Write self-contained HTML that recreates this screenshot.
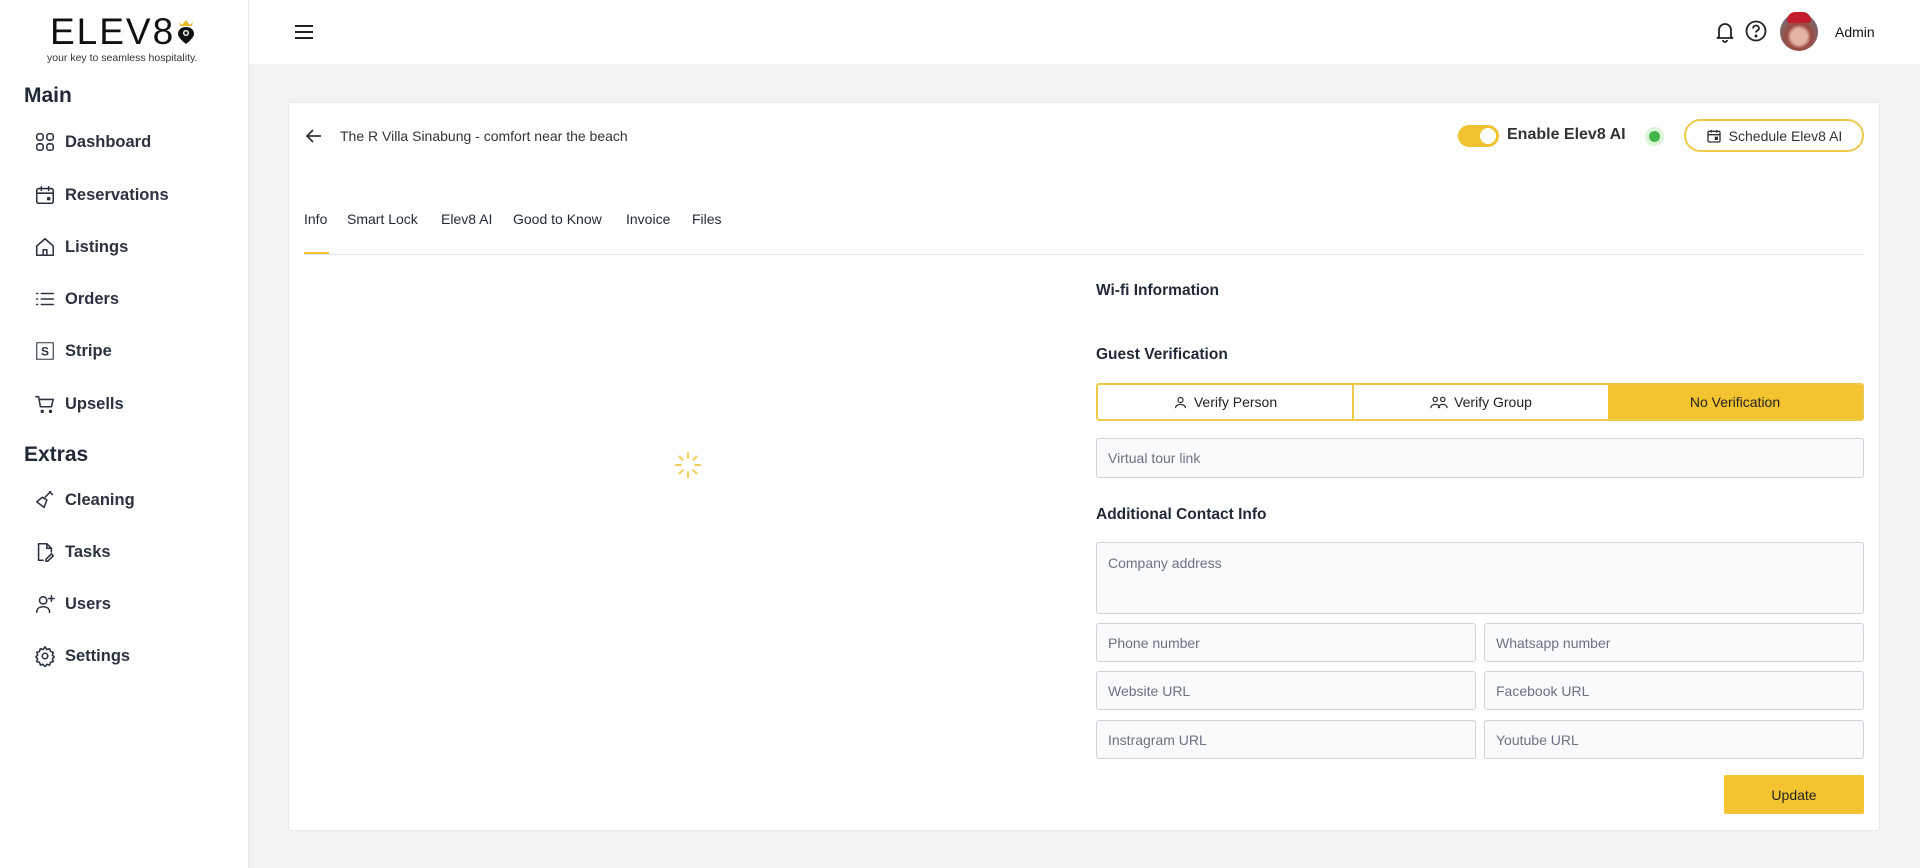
<!DOCTYPE html>
<html><head><meta charset="utf-8"><style>
*{box-sizing:border-box;margin:0;padding:0}
body{width:1920px;height:868px;overflow:hidden;background:#f1f2f4;font-family:"Liberation Sans",sans-serif;color:#1f2937;position:relative}
.abs{position:absolute}
#side{left:0;top:0;width:249px;height:868px;background:#fff;border-right:1px solid #e5e7eb}
#top{left:249px;top:0;width:1671px;height:64px;background:#fff}
.nav{position:absolute;left:34px;font-size:16.5px;font-weight:bold;color:#2b3340;display:flex;align-items:center;gap:9px;height:24px}
.nav svg{width:22px;height:22px;fill:none;stroke:#2b3340;stroke-width:1.7;stroke-linecap:round;stroke-linejoin:round}
.sec{position:absolute;left:24px;font-size:21px;font-weight:bold;color:#1f2937}
#card{left:288px;top:102px;width:1592px;height:729px;background:#fff;border:1px solid #e8e9ec;border-radius:3px}
.tab{position:absolute;top:211px;font-size:14px;color:#1f2937}
.h{position:absolute;left:1096px;font-size:15.5px;font-weight:bold;color:#1f2937}
.inp{position:absolute;background:#f9fafb;border:1px solid #cfd2d6;border-radius:3px;font-size:14px;color:#6b7280;padding-left:11px;display:flex;align-items:center}
</style></head><body>
<div id="side" class="abs">
  <div class="abs" style="left:50px;top:12px;font-size:37px;letter-spacing:2px;color:#111;font-weight:300;line-height:40px">ELEV8</div>
  <svg class="abs" style="left:174px;top:15px" width="24" height="30" viewBox="0 0 24 30"><path d="M5 7l3 3 4-5 4 5 3-3-1 4H6z" fill="#e9b824"/><path d="M12 12c-5 0-8 3-8 7 0 4 8 10 8 10s8-6 8-10c0-4-3-7-8-7z" fill="#111"/><circle cx="12" cy="18" r="3" fill="#fff"/><circle cx="12" cy="18" r="1.6" fill="#111"/></svg>
  <div class="abs" style="left:47px;top:52px;font-size:10.5px;color:#333">your key to seamless hospitality.</div>
  <div class="sec" style="top:84px">Main</div>
  <div class="nav" style="top:130px"><svg viewBox="0 0 24 24"><rect x="3" y="3" width="7" height="7" rx="2.5"/><rect x="14" y="3" width="7" height="7" rx="2.5"/><rect x="3" y="14" width="7" height="7" rx="2.5"/><rect x="14" y="14" width="7" height="7" rx="2.5"/></svg>Dashboard</div>
  <div class="nav" style="top:183px"><svg viewBox="0 0 24 24"><rect x="3" y="5" width="18" height="16" rx="2"/><path d="M3 10h18M8 3v4M16 3v4"/><rect x="15" y="15" width="2" height="2" fill="#2b3340"/></svg>Reservations</div>
  <div class="nav" style="top:235px"><svg viewBox="0 0 24 24"><path d="M3 11l9-8 9 8v10H3z"/><path d="M10 21v-6h4v6"/></svg>Listings</div>
  <div class="nav" style="top:287px"><svg viewBox="0 0 24 24"><path d="M8 6h13M8 12h13M8 18h13M3 6h1M3 12h1M3 18h1"/></svg>Orders</div>
  <div class="nav" style="top:339px"><svg viewBox="0 0 24 24" style="stroke-width:1.2"><rect x="3" y="3" width="18" height="18"/><text x="12" y="17" font-size="13" text-anchor="middle" fill="#2b3340" stroke="none" font-family="Liberation Sans">S</text></svg>Stripe</div>
  <div class="nav" style="top:392px"><svg viewBox="0 0 24 24"><path d="M2 4h3l2 11h12l2-8H6"/><circle cx="9" cy="20" r="1"/><circle cx="18" cy="20" r="1"/></svg>Upsells</div>
  <div class="sec" style="top:443px">Extras</div>
  <div class="nav" style="top:488px"><svg viewBox="0 0 24 24"><path d="M3 14l8 6 3-8-5-3z"/><path d="M12 9l6-6M17 3l3 3"/></svg>Cleaning</div>
  <div class="nav" style="top:540px"><svg viewBox="0 0 24 24"><path d="M10 21H5V3h9l5 5v4"/><path d="M14 3v5h5M13 20l6-6 2 2-6 6h-2z"/></svg>Tasks</div>
  <div class="nav" style="top:592px"><svg viewBox="0 0 24 24"><circle cx="10" cy="8" r="4"/><path d="M3 21c0-4 3-6 7-6s7 2 7 6M19 3v6M16 6h6"/></svg>Users</div>
  <div class="nav" style="top:644px"><svg viewBox="0 0 24 24"><circle cx="12" cy="12" r="3"/><path d="M12 2l2 3 3-1 1 3 3 1-1 3 2 2-2 2 1 3-3 1-1 3-3-1-2 3-2-3-3 1-1-3-3-1 1-3-2-2 2-2-1-3 3-1 1-3 3 1z"/></svg>Settings</div>
</div>
<div id="top" class="abs">
  <svg class="abs" style="left:45px;top:22px" width="20" height="20" viewBox="0 0 20 20"><path d="M1 4h18M1 10h18M1 16h18" stroke="#222" stroke-width="2"/></svg>
  <svg class="abs" style="left:1466px;top:21px" width="20" height="22" viewBox="0 0 20 22" fill="none" stroke="#222" stroke-width="1.8"><path d="M4 16V9a6 6 0 0112 0v7l2 1H2z"/><path d="M8 19a2 2 0 004 0"/></svg>
  <svg class="abs" style="left:1496px;top:20px" width="22" height="22" viewBox="0 0 22 22" fill="none" stroke="#222" stroke-width="1.8"><circle cx="11" cy="11" r="9.5"/><path d="M8 8.5a3 3 0 116 0c0 2-3 2-3 4"/><circle cx="11" cy="16" r=".6" fill="#222"/></svg>
  <div class="abs" style="left:1531px;top:13px;width:38px;height:38px;border-radius:50%;background:radial-gradient(circle at 50% 62%,#e3b4a3 0 26%,#9a4a40 40%,#7c6a73 70%,#b71c2a 100%)"></div>
  <div class="abs" style="left:1538px;top:12px;width:24px;height:11px;border-radius:12px 12px 4px 4px;background:#c41e2c"></div>
  <div class="abs" style="left:1586px;top:24px;font-size:14px;color:#111">Admin</div>
</div>
<div id="card" class="abs"></div>
<svg class="abs" style="left:305px;top:128px" width="18" height="16" viewBox="0 0 18 16" fill="none" stroke="#333" stroke-width="1.8"><path d="M16 8H2M8 2L2 8l6 6"/></svg>
<div class="abs" style="left:340px;top:128px;font-size:14px;color:#333">The R Villa Sinabung - comfort near the beach</div>
<div class="abs" style="left:1458px;top:125px;width:41px;height:22px;border-radius:11px;background:#efc232"></div>
<div class="abs" style="left:1480px;top:128px;width:16px;height:16px;border-radius:50%;background:#fff"></div>
<div class="abs" style="left:1507px;top:126px;font-size:16px;font-weight:bold;color:#333">Enable Elev8 AI</div>
<div class="abs" style="left:1649px;top:131px;width:11px;height:11px;border-radius:50%;background:#43b649;box-shadow:0 0 0 4px #dcf5d8"></div>
<div class="abs" style="left:1684px;top:119px;width:180px;height:33px;border:2px solid #efc94a;border-radius:17px;font-size:14px;color:#333;display:flex;align-items:center;justify-content:center;gap:7px"><svg width="16" height="16" viewBox="0 0 24 24" fill="none" stroke="#333" stroke-width="2"><rect x="3" y="5" width="18" height="16" rx="2"/><path d="M3 10h18M8 3v4M16 3v4"/><rect x="14" y="14" width="3" height="3" fill="#333"/></svg>Schedule Elev8 AI</div>
<div class="tab" style="left:304px">Info</div>
<div class="tab" style="left:347px">Smart Lock</div>
<div class="tab" style="left:441px">Elev8 AI</div>
<div class="tab" style="left:513px">Good to Know</div>
<div class="tab" style="left:626px">Invoice</div>
<div class="tab" style="left:692px">Files</div>
<div class="abs" style="left:304px;top:254px;width:1560px;height:1px;background:#e5e7eb"></div>
<div class="abs" style="left:304px;top:252px;width:25px;height:2px;background:#efc232"></div>
<svg class="abs" style="left:674px;top:451px" width="28" height="28" viewBox="0 0 28 28" stroke="#efc232" stroke-width="2" stroke-linecap="round" opacity=".8"><path d="M14 2v5M14 21v5M2 14h5M21 14h5M5.5 5.5l3.5 3.5M19 19l3.5 3.5M5.5 22.5L9 19M19 9l3.5-3.5"/></svg>
<div class="h" style="top:282px">Wi-fi Information</div>
<div class="h" style="top:346px">Guest Verification</div>
<div class="abs" style="left:1096px;top:383px;width:768px;height:38px;border:2px solid #efc94a;border-radius:3px;display:flex;font-size:14px;color:#222">
  <div style="width:256px;border-right:2px solid #efc94a;display:flex;align-items:center;justify-content:center;gap:6px"><svg width="15" height="15" viewBox="0 0 24 24" fill="none" stroke="#333" stroke-width="2"><circle cx="12" cy="8" r="4"/><path d="M4 21c0-4 4-6 8-6s8 2 8 6"/></svg>Verify Person</div>
  <div style="width:254px;display:flex;align-items:center;justify-content:center;gap:6px"><svg width="18" height="15" viewBox="0 0 28 24" fill="none" stroke="#333" stroke-width="2"><circle cx="8" cy="7" r="3.5"/><circle cx="20" cy="7" r="3.5"/><path d="M1 21c0-4 3-6 7-6s7 2 7 6M13 21c0-4 3-6 7-6s7 2 7 6"/></svg>Verify Group</div>
  <div style="flex:1;background:#f4c430;display:flex;align-items:center;justify-content:center">No Verification</div>
</div>
<div class="inp" style="left:1096px;top:438px;width:768px;height:40px">Virtual tour link</div>
<div class="h" style="top:506px">Additional Contact Info</div>
<div class="inp" style="left:1096px;top:542px;width:768px;height:72px;align-items:flex-start;padding-top:12px">Company address</div>
<div class="inp" style="left:1096px;top:623px;width:380px;height:39px">Phone number</div>
<div class="inp" style="left:1484px;top:623px;width:380px;height:39px">Whatsapp number</div>
<div class="inp" style="left:1096px;top:671px;width:380px;height:39px">Website URL</div>
<div class="inp" style="left:1484px;top:671px;width:380px;height:39px">Facebook URL</div>
<div class="inp" style="left:1096px;top:720px;width:380px;height:39px">Instragram URL</div>
<div class="inp" style="left:1484px;top:720px;width:380px;height:39px">Youtube URL</div>
<div class="abs" style="left:1724px;top:775px;width:140px;height:39px;background:#f4c430;border-radius:2px;font-size:14px;color:#222;display:flex;align-items:center;justify-content:center">Update</div>
</body></html>
